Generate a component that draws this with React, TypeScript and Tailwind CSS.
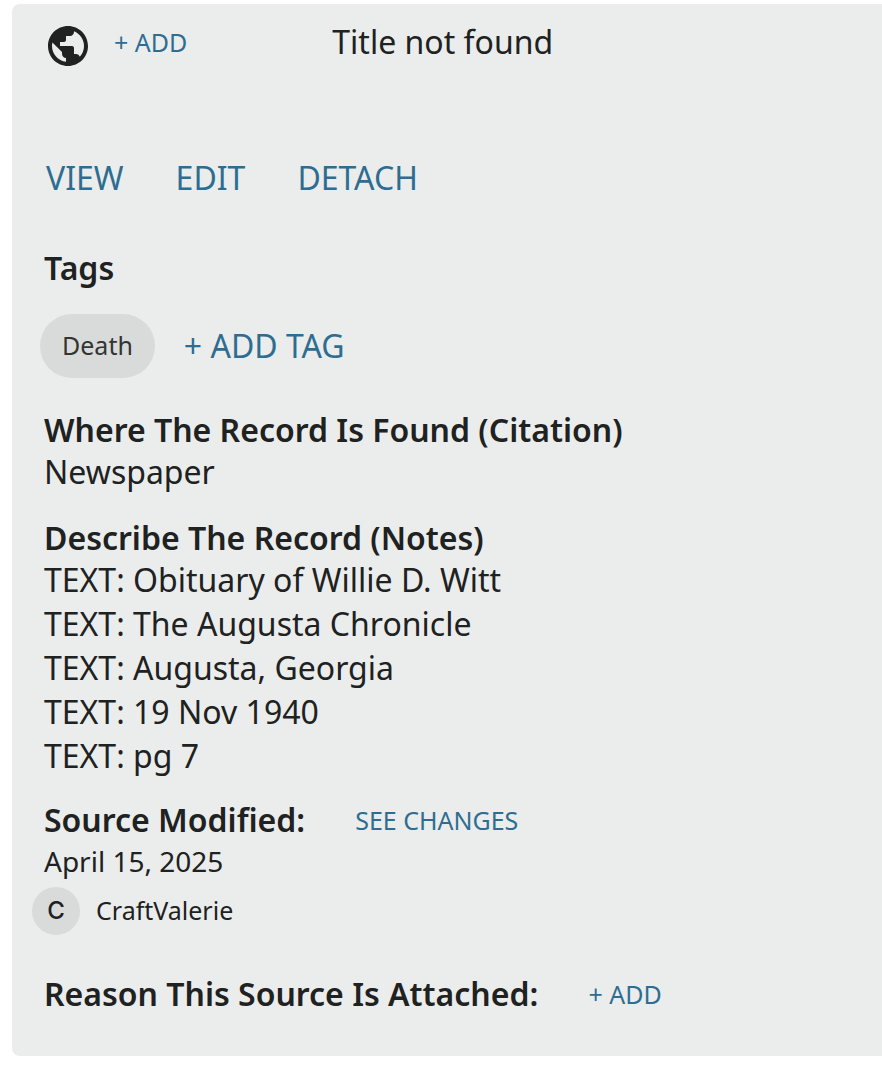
const notes = [
  "Obituary of Willie D. Witt",
  "The Augusta Chronicle",
  "Augusta, Georgia",
  "19 Nov 1940",
  "pg 7",
];

const link = "text-[#2e6d91] cursor-pointer";
const heading = "text-[32px] leading-10 font-semibold";

function GlobeIcon() {
  return (
    <svg viewBox="0 0 24 24" className="size-12 shrink-0" fill="currentColor" role="img" aria-label="Web page">
      <path d="M12 2C6.48 2 2 6.48 2 12s4.48 10 10 10 10-4.48 10-10S17.52 2 12 2zm-1 17.93c-3.95-.49-7-3.85-7-7.93 0-.62.08-1.21.21-1.79L9 15v1c0 1.1.9 2 2 2v1.93zm6.9-2.54c-.26-.81-1-1.39-1.9-1.39h-1v-3c0-.55-.45-1-1-1H8v-2h2c.55 0 1-.45 1-1V7h2c1.1 0 2-.9 2-2v-.41c2.93 1.19 5 4.06 5 7.41 0 2.08-.8 3.97-2.1 5.39z" />
    </svg>
  );
}

export default function App() {
  return (
    <main className="pt-1 pl-3 pb-3 bg-white font-['Noto_Sans',sans-serif] text-[#202121]">
      <article className="rounded-l-lg bg-[#ebedec] px-8 pt-[18px] pb-[42px]">
        <header className="flex items-start">
          <GlobeIcon />
          <button className={`${link} ml-[22px] text-[25px] leading-10`}>+ ADD</button>
          <h1 className="ml-[145px] text-[32px] leading-10">Title not found</h1>
        </header>

        <nav className="mt-[86px] ml-[2px] flex gap-[52px] text-[32px] leading-11">
          <a href="#view" className={link}>VIEW</a>
          <a href="#edit" className={link}>EDIT</a>
          <a href="#detach" className={link}>DETACH</a>
        </nav>

        <section className="mt-12">
          <h2 className={heading}>Tags</h2>
          <div className="-ml-1 mt-[26px] flex items-center gap-[29px]">
            <span className="flex h-16 items-center rounded-full bg-[#d9dbda] px-[22px] text-[25px] text-[#333434]">Death</span>
            <button className={`${link} text-[32px]`}>+ ADD TAG</button>
          </div>
        </section>

        <section className="mt-8">
          <h2 className={heading}>Where The Record Is Found (Citation)</h2>
          <p className="text-[32px] leading-11">Newspaper</p>
        </section>

        <section className="mt-6">
          <h2 className={heading}>Describe The Record (Notes)</h2>
          {notes.map((note) => (
            <p key={note} className="text-[32px] leading-11">TEXT: {note}</p>
          ))}
        </section>

        <section className="mt-[22px]">
          <div className="flex items-center gap-[50px]">
            <h2 className={heading}>Source Modified:</h2>
            <button className={`${link} text-[25px] leading-10`}>SEE CHANGES</button>
          </div>
          <p className="text-[28px] leading-[42px]">April 15, 2025</p>
          <div className="-ml-3 mt-[5px] flex items-center gap-4 text-[25px]">
            <span className="flex size-12 items-center justify-center rounded-full bg-[#d9dbda] font-['Inter',sans-serif] text-2xl font-medium">C</span>
            <span>CraftValerie</span>
          </div>
        </section>

        <section className="mt-[39px] flex items-center gap-[50px]">
          <h2 className={heading}>Reason This Source Is Attached:</h2>
          <button className={`${link} text-[25px] leading-10`}>+ ADD</button>
        </section>
      </article>
    </main>
  );
}
